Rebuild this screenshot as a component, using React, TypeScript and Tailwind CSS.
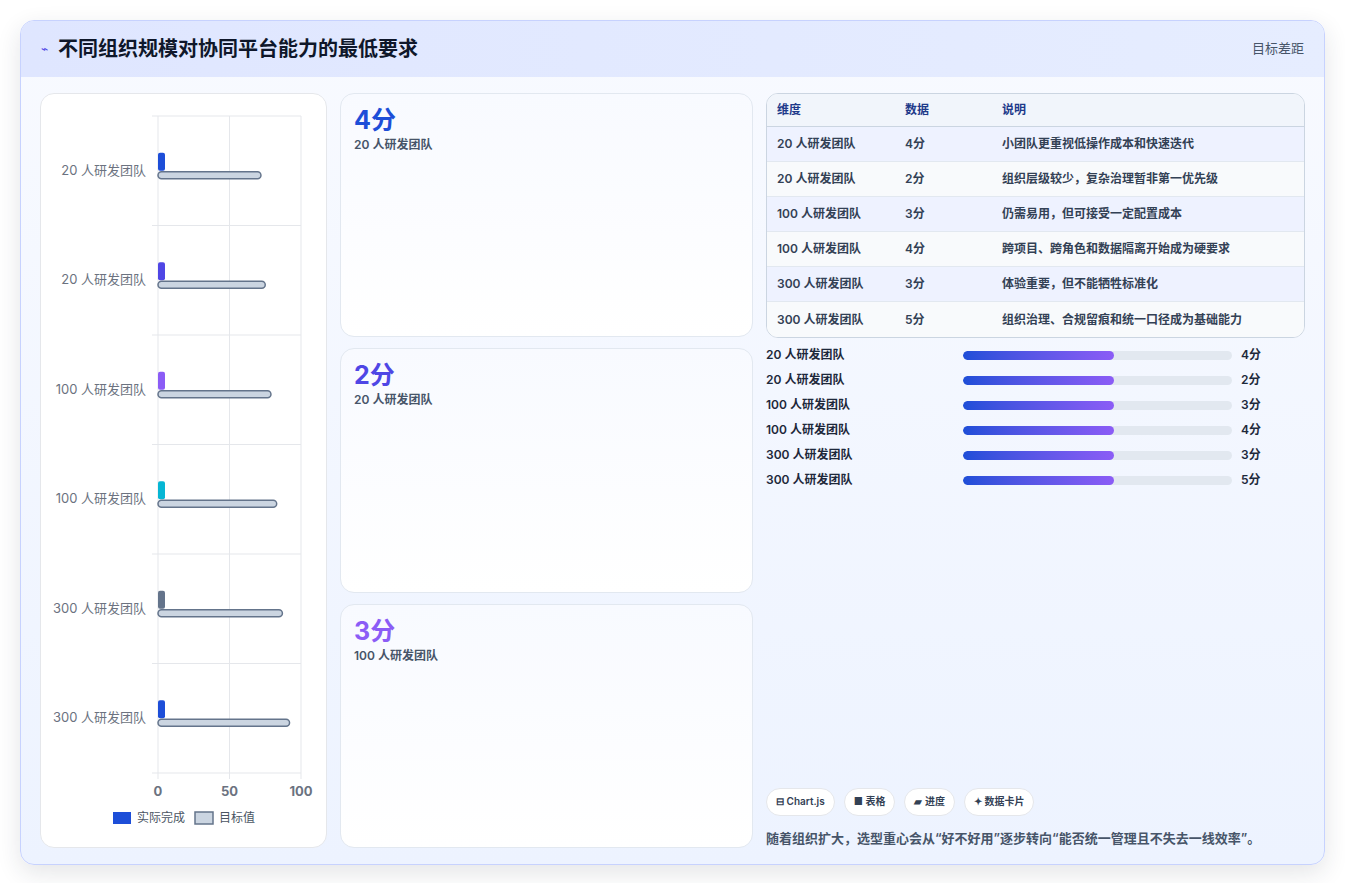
import React from "react";

const rows = [
  { l: "20 人研发团队", a: "#1d4ed8", t: 72, v: "4分", d: "小团队更重视低操作成本和快速迭代" },
  { l: "20 人研发团队", a: "#4f46e5", t: 75, v: "2分", d: "组织层级较少，复杂治理暂非第一优先级" },
  { l: "100 人研发团队", a: "#8b5cf6", t: 79, v: "3分", d: "仍需易用，但可接受一定配置成本" },
  { l: "100 人研发团队", a: "#06b6d4", t: 83, v: "4分", d: "跨项目、跨角色和数据隔离开始成为硬要求" },
  { l: "300 人研发团队", a: "#64748b", t: 87, v: "3分", d: "体验重要，但不能牺牲标准化" },
  { l: "300 人研发团队", a: "#1d4ed8", t: 92, v: "5分", d: "组织治理、合规留痕和统一口径成为基础能力" },
];

function Chart() {
  const L = 117, R = 260, T = 22, B = 679, rh = (B - T) / 6;
  const sx = (R - L) / 100;
  return (
    <svg width="286" height="753" className="block">
      {[0, 50, 100].map((v) => (
        <line key={v} x1={L + v * sx} x2={L + v * sx} y1={T} y2={B + 6} stroke="#e5e7eb" />
      ))}
      {[0, 1, 2, 3, 4, 5, 6].map((i) => (
        <line key={i} x1={L - 6} x2={R} y1={T + i * rh} y2={T + i * rh} stroke="#e5e7eb" />
      ))}
      {rows.map((r, i) => {
        const c = T + i * rh + rh / 2;
        return (
          <g key={i}>
            <text x={L - 12} y={c + 4} textAnchor="end" fontSize="13" fill="#6b7280">{r.l}</text>
            <rect x={L} y={c - 18} width={7} height={18} rx={2} fill={r.a} />
            <rect x={L} y={c + 1} width={r.t * sx} height={7} rx={3.5} fill="#cbd5e1" stroke="#64748b" strokeWidth="1.5" />
          </g>
        );
      })}
      {[0, 50, 100].map((v) => (
        <text key={v} x={L + v * sx} y={702} textAnchor="middle" fontSize="13" fontWeight="bold" fill="#6b7280">{v}</text>
      ))}
      <rect x={72} y={718} width={18} height={12} fill="#1d4ed8" />
      <text x={96} y={728} fontSize="12" fill="#4b5563">实际完成</text>
      <rect x={154} y={718} width={18} height={12} fill="#cbd5e1" stroke="#64748b" strokeWidth="1.5" />
      <text x={178} y={728} fontSize="12" fill="#4b5563">目标值</text>
    </svg>
  );
}

const cards = [
  { v: "4分", c: "text-[#1d4ed8]", l: "20 人研发团队" },
  { v: "2分", c: "text-[#4f46e5]", l: "20 人研发团队" },
  { v: "3分", c: "text-[#8b5cf6]", l: "100 人研发团队" },
];

export default function App() {
  return (
    <div className="w-[1345px] h-[883px] bg-white p-[20px] pb-[18px]" style={{ fontFamily: "Inter, 'Noto Sans CJK SC', sans-serif" }}>
      <div className="h-full rounded-[14px] border border-[#c7d2fe] bg-gradient-to-b from-[#f8faff] to-[#edf3ff] overflow-hidden shadow-[0_8px_24px_rgba(30,41,59,0.12)] flex flex-col">
        <div className="h-[56px] shrink-0 bg-gradient-to-r from-[#dfe6ff] to-[#e6edff] flex items-center justify-between px-[20px]">
          <div className="flex items-center gap-[10px]">
            <span className="text-[#4f46e5] text-[12px]">⌁</span>
            <span className="text-[20px] font-bold text-[#0f172a]">不同组织规模对协同平台能力的最低要求</span>
          </div>
          <span className="text-[13px] text-[#475569]">目标差距</span>
        </div>
        <div className="flex-1 flex gap-[13px] px-[19px] pt-[16px] pb-[18px]">
          <div className="w-[287px] bg-white rounded-[14px] border border-[#e5e7eb]">
            <Chart />
          </div>
          <div className="w-[413px] flex flex-col gap-[11px]">
            {cards.map((c, i) => (
              <div key={i} className="flex-1 rounded-[14px] border border-[#e2e8f0] bg-gradient-to-b from-[#f8faff] to-white px-[13px] pt-[10px]">
                <div className={`text-[25px] font-bold leading-[32px] ${c.c}`}>{c.v}</div>
                <div className="text-[12px] font-semibold text-[#475569]">{c.l}</div>
              </div>
            ))}
          </div>
          <div className="flex-1 flex flex-col">
            <div className="rounded-[12px] border border-[#cbd5e1] overflow-hidden bg-white">
              <div className="h-[33px] flex items-center bg-[#f1f5fb] border-b border-[#cbd5e1] text-[12px] font-semibold text-[#1e3a8a]">
                <span className="w-[138px] pl-[10px]">维度</span>
                <span className="w-[97px]">数据</span>
                <span>说明</span>
              </div>
              {rows.map((r, i) => (
                <div key={i} className={`h-[35px] flex items-center text-[12px] font-semibold text-[#334155] ${i % 2 === 0 ? "bg-[#eef2ff]" : "bg-[#f8fafc]"} ${i < 5 ? "border-b border-[#e2e8f0]" : ""}`}>
                  <span className="w-[138px] pl-[10px]">{r.l}</span>
                  <span className="w-[97px]">{r.v}</span>
                  <span>{r.d}</span>
                </div>
              ))}
            </div>
            <div className="flex flex-col gap-[7px] mt-[8px]">
              {rows.map((r, i) => (
                <div key={i} className="h-[18px] flex items-center text-[12px] font-semibold text-[#1e293b]">
                  <span className="w-[197px]">{r.l}</span>
                  <div className="w-[269px] h-[9px] rounded-full bg-[#e2e8f0] overflow-hidden">
                    <div className="h-full w-[56%] rounded-full bg-gradient-to-r from-[#1d4ed8] to-[#8b5cf6]" />
                  </div>
                  <span className="ml-[9px]">{r.v}</span>
                </div>
              ))}
            </div>
            <div className="flex-1" />
            <div className="flex gap-[9px]">
              {["⊟ Chart.js", "■ 表格", "▰ 进度", "✦ 数据卡片"].map((t) => (
                <span key={t} className="h-[28px] px-[9px] flex items-center rounded-full bg-white border border-[#e5e7eb] text-[10px] font-semibold text-[#334155]">{t}</span>
              ))}
            </div>
            <div className="mt-[13px] text-[13px] font-semibold text-[#475569]">随着组织扩大，选型重心会从“好不好用”逐步转向“能否统一管理且不失去一线效率”。</div>
          </div>
        </div>
      </div>
    </div>
  );
}
